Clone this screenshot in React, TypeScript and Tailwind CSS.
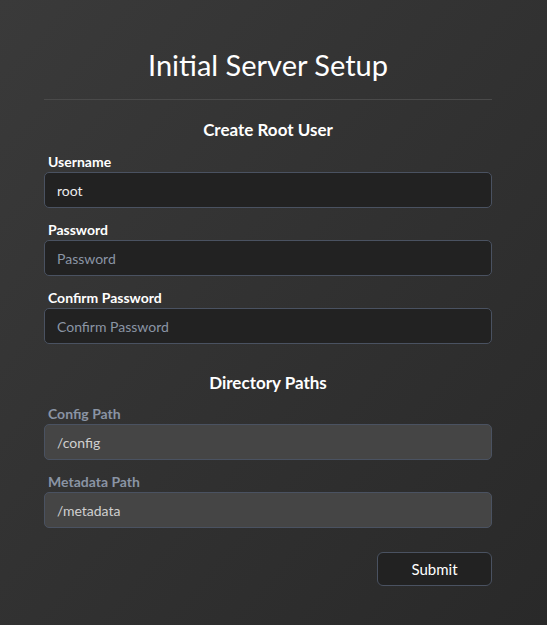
import React from "react";

function Field({
  label,
  value,
  placeholder,
  disabled,
  last,
}: {
  label: string;
  value?: string;
  placeholder?: string;
  disabled?: boolean;
  last?: boolean;
}) {
  return (
    <div className={last ? "" : "mb-[12px]"}>
      <div
        className={
          "h-[20px] pl-[4px] text-[14px] font-bold leading-[20px] " +
          (disabled ? "text-[#8a94a4]" : "text-white")
        }
      >
        {label}
      </div>
      <div
        className={
          "flex h-[36px] items-center rounded-[5px] border border-[#4a5261] px-[12px] text-[14px] " +
          (disabled ? "bg-[#454545] text-[#cfcfcf]" : "bg-[#222222]")
        }
      >
        {value ? (
          <span className={disabled ? "text-[#d0d0d0]" : "text-[#ececec]"}>{value}</span>
        ) : (
          <span className="text-[#8b95a5]">{placeholder}</span>
        )}
      </div>
    </div>
  );
}

export default function App() {
  return (
    <div
      className="min-h-[625px] w-full bg-gradient-to-br from-[#3a3a3a] to-[#292929]"
      style={{ fontFamily: 'Lato, "Noto Sans", sans-serif' }}
    >
      <div className="ml-[44px] w-[448px] pt-[47px]">
        <h1 className="text-center text-[29px] font-normal leading-[36px] text-white">
          Initial Server Setup
        </h1>
        <div className="mt-[16px] h-px bg-[#4a4a4a]" />
        <h2 className="mt-[18px] mb-[10px] text-center text-[17px] font-bold leading-[24px] text-white">
          Create Root User
        </h2>
        <Field label="Username" value="root" />
        <Field label="Password" placeholder="Password" />
        <Field label="Confirm Password" placeholder="Confirm Password" last />
        <h2 className="mt-[27px] mb-[9px] text-center text-[17px] font-bold leading-[24px] text-white">
          Directory Paths
        </h2>
        <Field label="Config Path" value="/config" disabled />
        <Field label="Metadata Path" value="/metadata" disabled last />
        <div className="mt-[24px] flex justify-end">
          <button className="h-[34px] w-[115px] rounded-[6px] border border-[#4a5261] bg-[#222222] text-[15px] text-white">
            Submit
          </button>
        </div>
      </div>
    </div>
  );
}
